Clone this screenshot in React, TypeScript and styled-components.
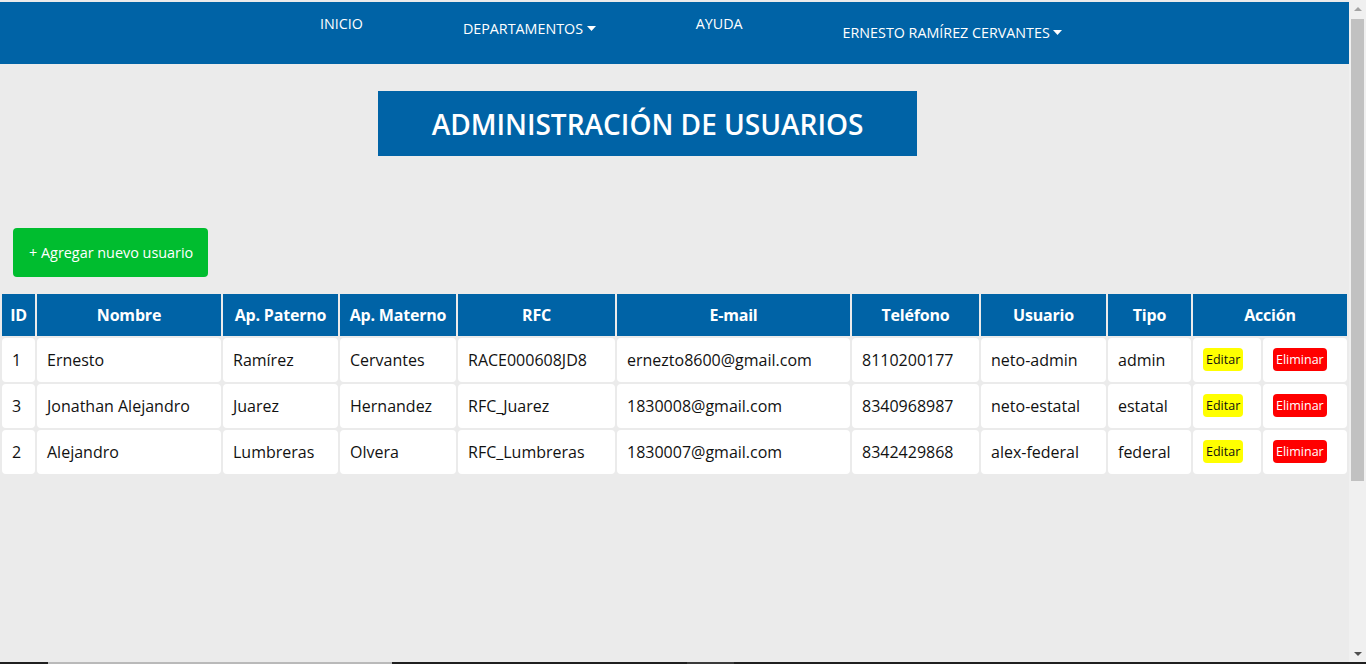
import * as React from 'react'
import styled, { createGlobalStyle } from 'styled-components'

const users = [
  { id: 1, nombre: 'Ernesto', paterno: 'Ramírez', materno: 'Cervantes', rfc: 'RACE000608JD8', email: 'ernezto8600@gmail.com', tel: '8110200177', usuario: 'neto-admin', tipo: 'admin' },
  { id: 3, nombre: 'Jonathan Alejandro', paterno: 'Juarez', materno: 'Hernandez', rfc: 'RFC_Juarez', email: '1830008@gmail.com', tel: '8340968987', usuario: 'neto-estatal', tipo: 'estatal' },
  { id: 2, nombre: 'Alejandro', paterno: 'Lumbreras', materno: 'Olvera', rfc: 'RFC_Lumbreras', email: '1830007@gmail.com', tel: '8342429868', usuario: 'alex-federal', tipo: 'federal' },
]

const colWidths = [33, 184, 115, 116, 157, 233, 127, 125, 83, 68]

const Caret = () => (
  <CaretSvg width="9" height="5" viewBox="0 0 9 5">
    <polygon points="0,0 9,0 4.5,5" fill="#fff" />
  </CaretSvg>
)

const App = () => {
  return (
    <Screen>
      <GlobalStyle />
      <Viewport>
        <Page>
          <NavBar>
            <NavItem $top={12}>INICIO</NavItem>
            <NavItem $top={17}>DEPARTAMENTOS <Caret /></NavItem>
            <NavItem $top={12}>AYUDA</NavItem>
            <NavItem $top={21}>ERNESTO RAMÍREZ CERVANTES <Caret /></NavItem>
          </NavBar>

          <TitleBox>
            <Title>ADMINISTRACIÓN DE USUARIOS</Title>
          </TitleBox>

          <AddButton>+ Agregar nuevo usuario</AddButton>

          <Table>
            <colgroup>
              {colWidths.map((w, i) => <col key={i} style={{ width: w }} />)}
              <col />
            </colgroup>
            <thead>
              <tr>
                <Th>ID</Th>
                <Th>Nombre</Th>
                <Th>Ap. Paterno</Th>
                <Th>Ap. Materno</Th>
                <Th>RFC</Th>
                <Th>E-mail</Th>
                <Th>Teléfono</Th>
                <Th>Usuario</Th>
                <Th>Tipo</Th>
                <Th colSpan={2}>Acción</Th>
              </tr>
            </thead>
            <tbody>
              {users.map(u => (
                <tr key={u.id}>
                  <Td>{u.id}</Td>
                  <Td>{u.nombre}</Td>
                  <Td>{u.paterno}</Td>
                  <Td>{u.materno}</Td>
                  <Td>{u.rfc}</Td>
                  <Td>{u.email}</Td>
                  <Td>{u.tel}</Td>
                  <Td>{u.usuario}</Td>
                  <Td>{u.tipo}</Td>
                  <Td><ActionButton $variant="edit">Editar</ActionButton></Td>
                  <Td><ActionButton $variant="delete">Eliminar</ActionButton></Td>
                </tr>
              ))}
            </tbody>
          </Table>
        </Page>

        <ScrollRail>
          <RailArrow>
            <svg width="8" height="4" viewBox="0 0 8 4"><polygon points="0,4 8,4 4,0" fill="#a3a3a3" /></svg>
          </RailArrow>
          <Thumb />
          <RailSpacer />
          <RailArrow>
            <svg width="8" height="4" viewBox="0 0 8 4"><polygon points="0,0 8,0 4,4" fill="#505050" /></svg>
          </RailArrow>
        </ScrollRail>
      </Viewport>

      <Taskbar>
        <TaskSegment $w={48} $c="#1f1f1f" />
        <TaskSegment $w={344} $c="#b9b9b9" />
        <TaskSegment $w={295} $c="#1f1f1f" />
        <TaskSegment $w={47} $c="#3a3a3a" />
        <TaskSegment $w={632} $c="#1f1f1f" />
      </Taskbar>
    </Screen>
  )
}

export default App

// Styles
const GlobalStyle = createGlobalStyle`
  html, body {
    margin: 0;
    padding: 0;
    overflow: hidden;
    background: #ebebeb;
  }
  body {
    font-family: "Open Sans", "Liberation Sans", sans-serif;
  }
`

const Screen = styled.div`
  display: flex;
  flex-direction: column;
  height: 100vh;
  background: #ebebeb;
`

const Viewport = styled.div`
  display: flex;
  flex: 1;
  min-height: 0;
`

const Page = styled.div`
  flex: 1;
  min-width: 0;
  overflow: hidden;
  padding-top: 2px;
`

const NavBar = styled.nav`
  display: flex;
  align-items: flex-start;
  gap: 100px;
  height: 62px;
  padding-left: 320px;
  background: #0063a6;
  box-sizing: border-box;
`

const NavItem = styled.div<{ $top: number }>`
  display: flex;
  align-items: center;
  gap: 3px;
  padding-top: ${p => p.$top}px;
  color: #fff;
  font-size: 14.3px;
  line-height: 19px;
  white-space: pre;
  cursor: pointer;
`

const CaretSvg = styled.svg`
  display: block;
  margin-left: -3px;
`

const TitleBox = styled.div`
  display: flex;
  align-items: center;
  justify-content: center;
  width: 40%;
  height: 65px;
  margin: 27px 0 0 28%;
  background: #0063a6;
`

const Title = styled.h1`
  margin: 0;
  color: #fff;
  font-size: 28px;
  font-weight: 600;
`

const AddButton = styled.button`
  display: block;
  height: 49px;
  margin: 72px 0 0 13px;
  padding: 0 15px 0 16px;
  border: none;
  border-radius: 4px;
  background: #00bd2f;
  color: #fff;
  font-family: "Open Sans", "Liberation Sans", sans-serif;
  font-size: 14.4px;
  cursor: pointer;
`

const Table = styled.table`
  width: 100%;
  margin-top: 15px;
  border-spacing: 2px;
  table-layout: fixed;
  font-size: 16px;
`

const Th = styled.th`
  padding: 10px 4px;
  background: #0063a6;
  color: #fff;
  font-weight: 700;
  line-height: 22px;
  text-align: center;
  white-space: nowrap;
  letter-spacing: -0.2px;
`

const Td = styled.td`
  height: 24px;
  padding: 10px;
  background: #fff;
  border-radius: 4px;
  color: #111;
  line-height: 24px;
  white-space: nowrap;
  overflow: hidden;
  vertical-align: top;
`

const ActionButton = styled.button<{ $variant: 'edit' | 'delete' }>`
  display: inline-block;
  vertical-align: top;
  height: 23px;
  padding: 0 3px;
  border: none;
  border-radius: 4px;
  background: ${p => (p.$variant === 'edit' ? '#ffff00' : '#ff0000')};
  color: ${p => (p.$variant === 'edit' ? '#111' : '#fff')};
  font-family: "Open Sans", "Liberation Sans", sans-serif;
  font-size: 12.5px;
  line-height: 23px;
  cursor: pointer;
`

const ScrollRail = styled.div`
  display: flex;
  flex-direction: column;
  width: 17px;
  background: #f0f0f0;
`

const RailArrow = styled.div`
  display: flex;
  align-items: center;
  justify-content: center;
  height: 17px;

  svg {
    display: block;
  }
`

const Thumb = styled.div`
  height: 462px;
  margin: 2px 2px 0;
  background: #c1c1c1;
`

const RailSpacer = styled.div`
  flex: 1;
`

const Taskbar = styled.div`
  display: flex;
  height: 2px;
  background: #1f1f1f;
`

const TaskSegment = styled.div<{ $w: number; $c: string }>`
  width: ${p => p.$w}px;
  background: ${p => p.$c};
`
